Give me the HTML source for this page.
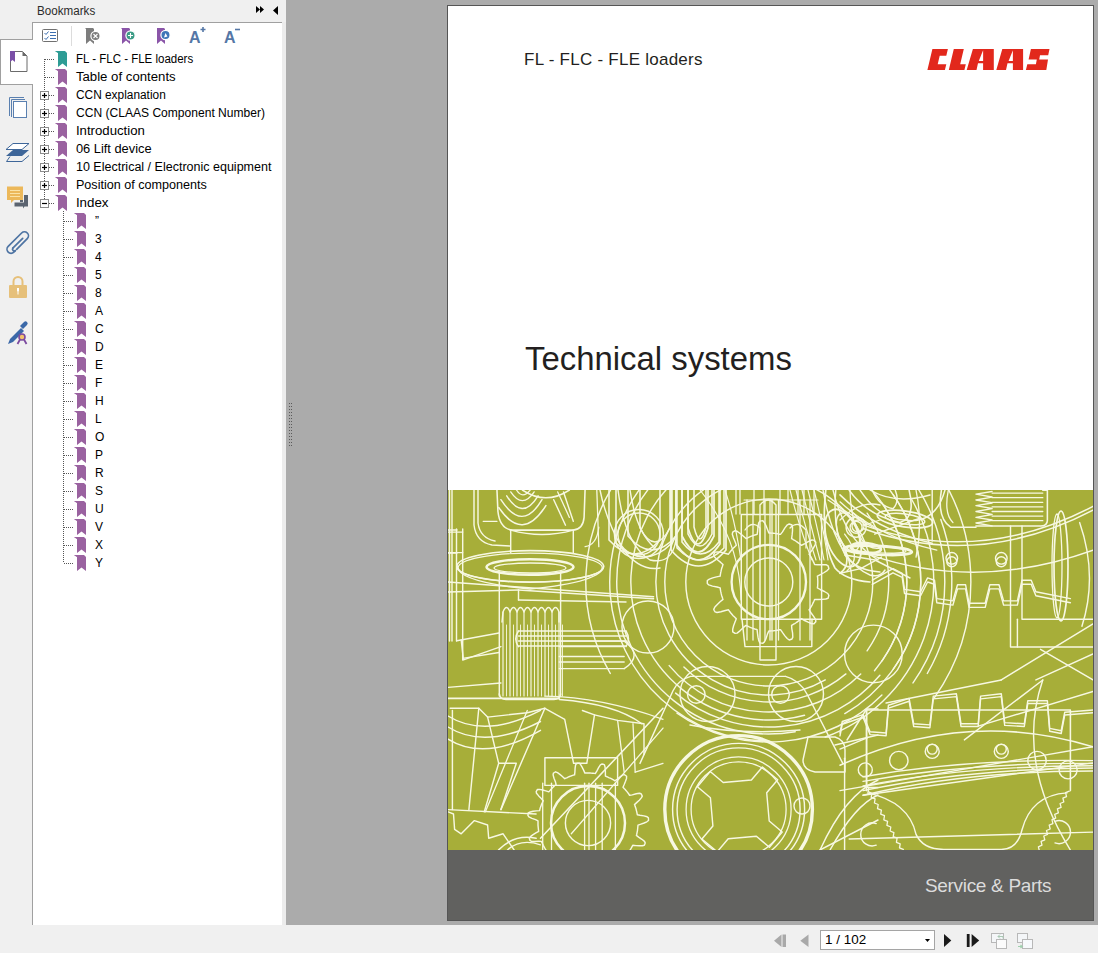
<!DOCTYPE html>
<html><head><meta charset="utf-8">
<style>
html,body{margin:0;padding:0;}
body{width:1098px;height:953px;position:relative;overflow:hidden;background:#f0f0f0;font-family:"Liberation Sans",sans-serif;}
.abs{position:absolute;}
#title{left:37px;top:3px;transform:scaleX(0.97);transform-origin:0 0;font-size:12px;line-height:16px;color:#2b2b2b;}
#panel{left:32px;top:22px;width:250px;height:903px;background:#fff;border-left:1px solid #a0a0a0;border-top:1px solid #a0a0a0;box-sizing:border-box;}
#tab{left:0;top:39px;width:33px;height:46px;background:#fff;border-left:1px solid #a0a0a0;border-top:1px solid #a0a0a0;border-bottom:1px solid #a0a0a0;box-sizing:border-box;}
#split{left:282px;top:22px;width:4px;height:903px;background:#ececec;}
#docarea{left:286px;top:0;width:812px;height:925px;background:#ababab;}
#page{left:447px;top:5px;width:647px;height:916px;background:#fff;border:1px solid #555;box-sizing:border-box;overflow:hidden;}
.row{position:absolute;font-size:12px;color:#000;white-space:nowrap;line-height:14px;}
</style></head>
<body>
<div id="docarea" class="abs"></div>
<div id="split" class="abs"></div>
<div id="panel" class="abs"></div>
<div id="tab" class="abs"></div>
<div id="title" class="abs">Bookmarks</div>
<svg class="abs" style="left:0;top:0" width="290" height="600"><path d="M45 59.5h10" stroke="#555" stroke-dasharray="1 1"/><path d="M55 51h10l2 2v14l-4.5-3.5-4.5 3.5v-14z" fill="#2e9c95"/><path d="M55 51h3v2z" fill="#2e9c95" opacity=".6"/><path d="M45 77.5h10" stroke="#555" stroke-dasharray="1 1"/><path d="M55 69h10l2 2v14l-4.5-3.5-4.5 3.5v-14z" fill="#9a62a0"/><path d="M55 69h3v2z" fill="#9a62a0" opacity=".6"/><rect x="40.5" y="91.5" width="8" height="8" fill="#fff" stroke="#8c8c8c"/><path d="M42 95.5h5" stroke="#000" stroke-width="1.2"/><path d="M44.5 93v5" stroke="#000" stroke-width="1.2"/><path d="M49 95.5h6" stroke="#555" stroke-dasharray="1 1"/><path d="M55 87h10l2 2v14l-4.5-3.5-4.5 3.5v-14z" fill="#9a62a0"/><path d="M55 87h3v2z" fill="#9a62a0" opacity=".6"/><rect x="40.5" y="109.5" width="8" height="8" fill="#fff" stroke="#8c8c8c"/><path d="M42 113.5h5" stroke="#000" stroke-width="1.2"/><path d="M44.5 111v5" stroke="#000" stroke-width="1.2"/><path d="M49 113.5h6" stroke="#555" stroke-dasharray="1 1"/><path d="M55 105h10l2 2v14l-4.5-3.5-4.5 3.5v-14z" fill="#9a62a0"/><path d="M55 105h3v2z" fill="#9a62a0" opacity=".6"/><rect x="40.5" y="127.5" width="8" height="8" fill="#fff" stroke="#8c8c8c"/><path d="M42 131.5h5" stroke="#000" stroke-width="1.2"/><path d="M44.5 129v5" stroke="#000" stroke-width="1.2"/><path d="M49 131.5h6" stroke="#555" stroke-dasharray="1 1"/><path d="M55 123h10l2 2v14l-4.5-3.5-4.5 3.5v-14z" fill="#9a62a0"/><path d="M55 123h3v2z" fill="#9a62a0" opacity=".6"/><rect x="40.5" y="145.5" width="8" height="8" fill="#fff" stroke="#8c8c8c"/><path d="M42 149.5h5" stroke="#000" stroke-width="1.2"/><path d="M44.5 147v5" stroke="#000" stroke-width="1.2"/><path d="M49 149.5h6" stroke="#555" stroke-dasharray="1 1"/><path d="M55 141h10l2 2v14l-4.5-3.5-4.5 3.5v-14z" fill="#9a62a0"/><path d="M55 141h3v2z" fill="#9a62a0" opacity=".6"/><rect x="40.5" y="163.5" width="8" height="8" fill="#fff" stroke="#8c8c8c"/><path d="M42 167.5h5" stroke="#000" stroke-width="1.2"/><path d="M44.5 165v5" stroke="#000" stroke-width="1.2"/><path d="M49 167.5h6" stroke="#555" stroke-dasharray="1 1"/><path d="M55 159h10l2 2v14l-4.5-3.5-4.5 3.5v-14z" fill="#9a62a0"/><path d="M55 159h3v2z" fill="#9a62a0" opacity=".6"/><rect x="40.5" y="181.5" width="8" height="8" fill="#fff" stroke="#8c8c8c"/><path d="M42 185.5h5" stroke="#000" stroke-width="1.2"/><path d="M44.5 183v5" stroke="#000" stroke-width="1.2"/><path d="M49 185.5h6" stroke="#555" stroke-dasharray="1 1"/><path d="M55 177h10l2 2v14l-4.5-3.5-4.5 3.5v-14z" fill="#9a62a0"/><path d="M55 177h3v2z" fill="#9a62a0" opacity=".6"/><rect x="40.5" y="199.5" width="8" height="8" fill="#fff" stroke="#8c8c8c"/><path d="M42 203.5h5" stroke="#000" stroke-width="1.2"/><path d="M49 203.5h6" stroke="#555" stroke-dasharray="1 1"/><path d="M55 195h10l2 2v14l-4.5-3.5-4.5 3.5v-14z" fill="#9a62a0"/><path d="M55 195h3v2z" fill="#9a62a0" opacity=".6"/><path d="M64 221.5h10" stroke="#555" stroke-dasharray="1 1"/><path d="M74 213h10l2 2v14l-4.5-3.5-4.5 3.5v-14z" fill="#9a62a0"/><path d="M74 213h3v2z" fill="#9a62a0" opacity=".6"/><path d="M64 239.5h10" stroke="#555" stroke-dasharray="1 1"/><path d="M74 231h10l2 2v14l-4.5-3.5-4.5 3.5v-14z" fill="#9a62a0"/><path d="M74 231h3v2z" fill="#9a62a0" opacity=".6"/><path d="M64 257.5h10" stroke="#555" stroke-dasharray="1 1"/><path d="M74 249h10l2 2v14l-4.5-3.5-4.5 3.5v-14z" fill="#9a62a0"/><path d="M74 249h3v2z" fill="#9a62a0" opacity=".6"/><path d="M64 275.5h10" stroke="#555" stroke-dasharray="1 1"/><path d="M74 267h10l2 2v14l-4.5-3.5-4.5 3.5v-14z" fill="#9a62a0"/><path d="M74 267h3v2z" fill="#9a62a0" opacity=".6"/><path d="M64 293.5h10" stroke="#555" stroke-dasharray="1 1"/><path d="M74 285h10l2 2v14l-4.5-3.5-4.5 3.5v-14z" fill="#9a62a0"/><path d="M74 285h3v2z" fill="#9a62a0" opacity=".6"/><path d="M64 311.5h10" stroke="#555" stroke-dasharray="1 1"/><path d="M74 303h10l2 2v14l-4.5-3.5-4.5 3.5v-14z" fill="#9a62a0"/><path d="M74 303h3v2z" fill="#9a62a0" opacity=".6"/><path d="M64 329.5h10" stroke="#555" stroke-dasharray="1 1"/><path d="M74 321h10l2 2v14l-4.5-3.5-4.5 3.5v-14z" fill="#9a62a0"/><path d="M74 321h3v2z" fill="#9a62a0" opacity=".6"/><path d="M64 347.5h10" stroke="#555" stroke-dasharray="1 1"/><path d="M74 339h10l2 2v14l-4.5-3.5-4.5 3.5v-14z" fill="#9a62a0"/><path d="M74 339h3v2z" fill="#9a62a0" opacity=".6"/><path d="M64 365.5h10" stroke="#555" stroke-dasharray="1 1"/><path d="M74 357h10l2 2v14l-4.5-3.5-4.5 3.5v-14z" fill="#9a62a0"/><path d="M74 357h3v2z" fill="#9a62a0" opacity=".6"/><path d="M64 383.5h10" stroke="#555" stroke-dasharray="1 1"/><path d="M74 375h10l2 2v14l-4.5-3.5-4.5 3.5v-14z" fill="#9a62a0"/><path d="M74 375h3v2z" fill="#9a62a0" opacity=".6"/><path d="M64 401.5h10" stroke="#555" stroke-dasharray="1 1"/><path d="M74 393h10l2 2v14l-4.5-3.5-4.5 3.5v-14z" fill="#9a62a0"/><path d="M74 393h3v2z" fill="#9a62a0" opacity=".6"/><path d="M64 419.5h10" stroke="#555" stroke-dasharray="1 1"/><path d="M74 411h10l2 2v14l-4.5-3.5-4.5 3.5v-14z" fill="#9a62a0"/><path d="M74 411h3v2z" fill="#9a62a0" opacity=".6"/><path d="M64 437.5h10" stroke="#555" stroke-dasharray="1 1"/><path d="M74 429h10l2 2v14l-4.5-3.5-4.5 3.5v-14z" fill="#9a62a0"/><path d="M74 429h3v2z" fill="#9a62a0" opacity=".6"/><path d="M64 455.5h10" stroke="#555" stroke-dasharray="1 1"/><path d="M74 447h10l2 2v14l-4.5-3.5-4.5 3.5v-14z" fill="#9a62a0"/><path d="M74 447h3v2z" fill="#9a62a0" opacity=".6"/><path d="M64 473.5h10" stroke="#555" stroke-dasharray="1 1"/><path d="M74 465h10l2 2v14l-4.5-3.5-4.5 3.5v-14z" fill="#9a62a0"/><path d="M74 465h3v2z" fill="#9a62a0" opacity=".6"/><path d="M64 491.5h10" stroke="#555" stroke-dasharray="1 1"/><path d="M74 483h10l2 2v14l-4.5-3.5-4.5 3.5v-14z" fill="#9a62a0"/><path d="M74 483h3v2z" fill="#9a62a0" opacity=".6"/><path d="M64 509.5h10" stroke="#555" stroke-dasharray="1 1"/><path d="M74 501h10l2 2v14l-4.5-3.5-4.5 3.5v-14z" fill="#9a62a0"/><path d="M74 501h3v2z" fill="#9a62a0" opacity=".6"/><path d="M64 527.5h10" stroke="#555" stroke-dasharray="1 1"/><path d="M74 519h10l2 2v14l-4.5-3.5-4.5 3.5v-14z" fill="#9a62a0"/><path d="M74 519h3v2z" fill="#9a62a0" opacity=".6"/><path d="M64 545.5h10" stroke="#555" stroke-dasharray="1 1"/><path d="M74 537h10l2 2v14l-4.5-3.5-4.5 3.5v-14z" fill="#9a62a0"/><path d="M74 537h3v2z" fill="#9a62a0" opacity=".6"/><path d="M64 563.5h10" stroke="#555" stroke-dasharray="1 1"/><path d="M74 555h10l2 2v14l-4.5-3.5-4.5 3.5v-14z" fill="#9a62a0"/><path d="M74 555h3v2z" fill="#9a62a0" opacity=".6"/><path d="M44.5 59V91M44.5 100v9M44.5 118v9M44.5 136v9M44.5 154v9M44.5 172v9M44.5 190v9" stroke="#555" stroke-dasharray="1 1"/><path d="M63.5 211V563" stroke="#555" stroke-dasharray="1 1"/></svg>
<div class="row" style="left:76px;top:52px;transform:scaleX(0.958);transform-origin:1px 0">FL - FLC - FLE loaders</div>
<div class="row" style="left:76px;top:70px;transform:scaleX(1.1);transform-origin:1px 0">Table of contents</div>
<div class="row" style="left:76px;top:88px;transform:scaleX(0.989);transform-origin:1px 0">CCN explanation</div>
<div class="row" style="left:76px;top:106px;transform:scaleX(1.005);transform-origin:1px 0">CCN (CLAAS Component Number)</div>
<div class="row" style="left:76px;top:124px;transform:scaleX(1.1);transform-origin:1px 0">Introduction</div>
<div class="row" style="left:76px;top:142px;transform:scaleX(1.07);transform-origin:1px 0">06 Lift device</div>
<div class="row" style="left:76px;top:160px;transform:scaleX(1.043);transform-origin:1px 0">10 Electrical / Electronic equipment</div>
<div class="row" style="left:76px;top:178px;transform:scaleX(1.049);transform-origin:1px 0">Position of components</div>
<div class="row" style="left:76px;top:196px;transform:scaleX(1.11);transform-origin:1px 0">Index</div>
<div class="row" style="left:95px;top:214px">”</div>
<div class="row" style="left:95px;top:232px">3</div>
<div class="row" style="left:95px;top:250px">4</div>
<div class="row" style="left:95px;top:268px">5</div>
<div class="row" style="left:95px;top:286px">8</div>
<div class="row" style="left:95px;top:304px">A</div>
<div class="row" style="left:95px;top:322px">C</div>
<div class="row" style="left:95px;top:340px">D</div>
<div class="row" style="left:95px;top:358px">E</div>
<div class="row" style="left:95px;top:376px">F</div>
<div class="row" style="left:95px;top:394px">H</div>
<div class="row" style="left:95px;top:412px">L</div>
<div class="row" style="left:95px;top:430px">O</div>
<div class="row" style="left:95px;top:448px">P</div>
<div class="row" style="left:95px;top:466px">R</div>
<div class="row" style="left:95px;top:484px">S</div>
<div class="row" style="left:95px;top:502px">U</div>
<div class="row" style="left:95px;top:520px">V</div>
<div class="row" style="left:95px;top:538px">X</div>
<div class="row" style="left:95px;top:556px">Y</div>
<svg class="abs" style="left:0;top:0" width="300" height="460">
<!-- header arrows -->
<path d="M256 6l4 3.5-4 3.5zM260 6l4 3.5-4 3.5z" fill="#000"/>
<path d="M278 6v9l-5-4.5z" fill="#000"/>
<!-- active tab doc icon -->
<path d="M10.5 51.5h12l4.5 4.5v15.5h-16.5z" fill="#fff" stroke="#6b6b6b"/>
<path d="M22.5 51.5v4.5h4.5z" fill="#6b6b6b"/>
<path d="M10 51h5v11l-2.5-2-2.5 2z" fill="#7a4fa6"/>
<!-- pages icon -->
<path d="M9.5 116V97.5h14.5M11.5 117V99.5h13.5" fill="none" stroke="#5a80b0"/>
<rect x="13.5" y="101.5" width="13" height="16" fill="#fff" stroke="#5a80b0"/>
<!-- layers icon -->
<path d="M13 143.5h16l-7 6h-16z" fill="#fff" stroke="#3e6699"/>
<path d="M13 150h16l-7 6h-16z" fill="#3e6699"/>
<path d="M10 156.5l-3.5 5h15.5l7-6" fill="none" stroke="#3e6699"/>
<!-- comments icon -->
<path d="M7 186.5h16v13.5h-9l-3 3v-3h-4z" fill="#ecb85a"/>
<path d="M10 190.5h10M10 193.5h10M10 196.5h10" stroke="#fbe3a8" stroke-width="1"/>
<path d="M24 195h4v11.5h-3.5l-1.5 2v-2h-8.5v-4h9.5z" fill="#5b6470"/>
<path d="M23 200h-3v2h3z" fill="#5b6470"/>
<!-- paperclip -->
<g transform="rotate(-45 18.3 242)" fill="none" stroke="#4e74a3" stroke-width="1.7" stroke-linecap="round">
<path d="M12 246 H27 A4 4 0 0 0 27 238 H8 A4 4 0 0 0 8 246 H10"/>
<path d="M10 242.5 H24" />
<path d="M10 242.5 A1.8 1.8 0 0 0 10 246"/>
</g>
<!-- lock -->
<path d="M13.5 285v-3.5a4.5 4.5 0 0 1 9 0v3.5" fill="none" stroke="#e6c07a" stroke-width="2"/>
<rect x="9" y="285" width="18" height="13" rx="1" fill="#e6c07a"/>
<path d="M17 288h2v3l-0.5 0.5v3h-1v-3l-0.5-0.5z" fill="#fff"/>
<!-- sign icon -->
<path d="M8 344l2-5 11-11 3 3-11 11z" fill="#3b68a8"/>
<path d="M20 326l4-4a2 2 0 0 1 3 3l-4 4z" fill="#3b68a8"/>
<circle cx="22" cy="337" r="3" fill="#f2c36b" stroke="#7c4ba0" stroke-width="1.6"/>
<path d="M20 339.5l-2.5 4.5M24 339.5l2.5 4.5" stroke="#7c4ba0" stroke-width="1.8"/>
<!-- toolbar: checklist -->
<rect x="42.5" y="29.5" width="15" height="12" rx="1" fill="#fff" stroke="#707070"/>
<path d="M44.5 33l1.5 1.5 2.5-3M44.5 38l1.5 1.5 2.5-3" fill="none" stroke="#3d6fb0" stroke-width="1"/>
<path d="M50 32.5h6M50 35.5h6M50 38.5h6" stroke="#3d6fb0" stroke-width="1"/>
<path d="M71.5 26v20" stroke="#dcdcdc"/>
<!-- gray bookmark x -->
<path d="M85 28h8l1 1v15l-4-3.5-4 3.5v-15z" fill="#7d7d7d"/>
<circle cx="95.5" cy="36" r="4.6" fill="#7d7d7d" stroke="#fff" stroke-width="1.2"/>
<path d="M93.5 34l4 4M97.5 34l-4 4" stroke="#fff" stroke-width="1.1"/>
<!-- purple bookmark plus -->
<path d="M121 28h8l1 1v15l-4-3.5-4 3.5v-15z" fill="#8a55a8"/>
<circle cx="130.5" cy="35.5" r="4.6" fill="#3c9c86" stroke="#fff" stroke-width="1.2"/>
<path d="M128 35.5h5M130.5 33v5" stroke="#fff" stroke-width="1.1"/>
<!-- purple bookmark arrow -->
<path d="M157 28h7l1 1v15l-4-3.5-4 3.5v-15z" fill="#8a55a8"/>
<circle cx="165.5" cy="35" r="4.6" fill="#3f76b8" stroke="#fff" stroke-width="1.2"/>
<path d="M164 37.5l1.5-4.5 2 3.5z" fill="#fff"/>
<!-- A+ A- -->
<text x="189" y="43" font-family="Liberation Sans" font-weight="bold" font-size="16" fill="#5577a6">A</text>
<path d="M200.5 29.5h5M203 27v5" stroke="#5577a6" stroke-width="1.6"/>
<text x="224" y="43" font-family="Liberation Sans" font-weight="bold" font-size="16" fill="#5577a6">A</text>
<path d="M235 29.5h5" stroke="#5577a6" stroke-width="1.6"/>
<!-- splitter dots -->
<g fill="#5a5a5a">
<rect x="289" y="403" width="1" height="1"/><rect x="291" y="403" width="1" height="1"/><rect x="289" y="406" width="1" height="1"/><rect x="291" y="406" width="1" height="1"/><rect x="289" y="409" width="1" height="1"/><rect x="291" y="409" width="1" height="1"/><rect x="289" y="412" width="1" height="1"/><rect x="291" y="412" width="1" height="1"/><rect x="289" y="415" width="1" height="1"/><rect x="291" y="415" width="1" height="1"/><rect x="289" y="418" width="1" height="1"/><rect x="291" y="418" width="1" height="1"/><rect x="289" y="421" width="1" height="1"/><rect x="291" y="421" width="1" height="1"/><rect x="289" y="424" width="1" height="1"/><rect x="291" y="424" width="1" height="1"/><rect x="289" y="427" width="1" height="1"/><rect x="291" y="427" width="1" height="1"/><rect x="289" y="430" width="1" height="1"/><rect x="291" y="430" width="1" height="1"/><rect x="289" y="433" width="1" height="1"/><rect x="291" y="433" width="1" height="1"/><rect x="289" y="436" width="1" height="1"/><rect x="291" y="436" width="1" height="1"/><rect x="289" y="439" width="1" height="1"/><rect x="291" y="439" width="1" height="1"/><rect x="289" y="442" width="1" height="1"/><rect x="291" y="442" width="1" height="1"/><rect x="289" y="445" width="1" height="1"/><rect x="291" y="445" width="1" height="1"/></g>
</svg>

<div id="page" class="abs"></div>
<div class="abs" style="left:448px;top:490px;width:645px;height:360px;background:#a7ae39;overflow:hidden"><svg width="645" height="360" style="position:absolute;left:0;top:0"><g transform="translate(-448 -490)" fill="none" stroke="#f7f8e2" stroke-linejoin="round" stroke-linecap="round"><circle cx="768.8" cy="582.0" r="83.0" stroke-width="1.43"/><circle cx="768.8" cy="582.0" r="104.0" stroke-width="1.43"/><path d="M825.3 679.9 A113 113 0 1 1 825.3 484.1" stroke-width="1.43"/><path d="M804.5 715.3 A138 138 0 1 1 816.0 452.3" stroke-width="1.43"/><path d="M795.2 731.7 A152 152 0 1 1 782.0 430.6" stroke-width="1.43"/><path d="M768.8 741.0 A159 159 0 0 1 741.2 425.4" stroke-width="1.43"/><path d="M610.3 673.5 A183 183 0 0 1 618.9 477.0" stroke-width="1.43"/><path d="M837.8 462.5 A138 138 0 0 1 874.5 670.7" stroke-width="1.43"/><path d="M885.2 484.3 A152 152 0 0 1 844.8 713.6" stroke-width="1.43"/><path d="M911.7 499.5 A165 165 0 0 1 825.2 737.0" stroke-width="1.43"/><path d="M940.8 519.4 A183 183 0 0 1 927.3 673.5" stroke-width="1.43"/><path d="M721.8 596.0 L721.5 594.9 L721.2 593.7 L721.0 592.6 L720.7 591.4 L720.5 590.2 L720.3 589.1 L720.2 587.9 L717.1 587.0 L712.5 586.1 L708.8 584.9 L707.3 583.5 L707.3 582.0 L707.3 580.5 L709.4 579.1 L712.7 577.9 L716.5 576.9 L720.2 576.1 L720.3 574.9 L720.5 573.8 L720.7 572.6 L721.0 571.4 L721.2 570.3 L721.5 569.1 L721.8 568.0 L722.2 566.9 L722.6 565.7 L723.0 564.6 L720.7 562.4 L717.1 559.5 L714.3 556.7 L713.7 554.7 L714.3 553.4 L715.1 552.1 L717.6 551.9 L721.1 552.3 L724.8 553.2 L728.5 554.2 L729.2 553.2 L729.9 552.2 L730.6 551.3 L731.3 550.4 L732.1 549.5 L732.9 548.6 L733.7 547.8 L734.6 546.9 L735.4 546.1 L736.3 545.3 L735.3 542.3 L733.5 538.0 L732.3 534.2 L732.7 532.2 L733.9 531.4 L735.1 530.6 L737.4 531.5 L740.3 533.6 L743.2 536.0 L746.0 538.6 L747.1 538.1 L748.2 537.6 L749.2 537.1 L750.3 536.6 L751.4 536.2 L752.5 535.8 L753.7 535.4 L754.8 535.0 L755.9 534.7 L757.1 534.4 L757.6 531.3 L758.0 526.6 L758.7 522.8 L759.9 521.1 L761.4 520.9 L762.9 520.8 L764.5 522.7 L766.1 525.9 L767.5 529.4 L768.8 533.0 L770.0 533.0 L771.2 533.1 L772.3 533.1 L773.5 533.2 L774.7 533.4 L775.9 533.5 L777.0 533.7 L778.2 533.9 L779.4 534.2 L780.5 534.4 L782.5 531.9 L784.9 527.9 L787.4 524.8 L789.2 524.0 L790.6 524.5 L792.0 525.0 L792.5 527.5 L792.5 531.0 L792.1 534.9 L791.6 538.6 L792.6 539.2 L793.6 539.8 L794.7 540.4 L795.7 541.0 L796.6 541.7 L797.6 542.4 L798.6 543.1 L799.5 543.8 L800.4 544.5 L801.3 545.3 L804.2 544.0 L808.2 541.6 L811.8 540.0 L813.8 540.1 L814.8 541.2 L815.8 542.3 L815.1 544.8 L813.5 547.9 L811.3 551.1 L809.1 554.2 L809.8 555.1 L810.4 556.1 L811.0 557.2 L811.6 558.2 L812.2 559.2 L812.7 560.3 L813.2 561.4 L813.7 562.4 L814.2 563.5 L814.6 564.6 L817.8 564.8 L822.5 564.6 L826.4 564.8 L828.1 565.8 L828.5 567.3 L828.9 568.7 L827.1 570.6 L824.2 572.5 L820.8 574.4 L817.4 576.1 L817.6 577.3 L817.7 578.5 L817.7 579.6 L817.8 580.8 L817.8 582.0 L817.8 583.2 L817.7 584.4 L817.7 585.5 L817.6 586.7 L817.4 587.9 L820.2 589.5 L824.4 591.5 L827.8 593.5 L828.9 595.3 L828.5 596.7 L828.1 598.2 L825.8 599.0 L822.3 599.4 L818.4 599.5 L814.6 599.4 L814.2 600.5 L813.7 601.6 L813.2 602.6 L812.7 603.7 L812.2 604.8 L811.6 605.8 L811.0 606.8 L810.4 607.9 L809.8 608.9 L809.1 609.8 L810.8 612.5 L813.6 616.3 L815.7 619.6 L815.8 621.7 L814.8 622.8 L813.8 623.9 L811.3 623.5 L808.1 622.2 L804.6 620.5 L801.3 618.7 L800.4 619.5 L799.5 620.2 L798.6 620.9 L797.6 621.6 L796.6 622.3 L795.7 623.0 L794.7 623.6 L793.6 624.2 L792.6 624.8 L791.6 625.4 L791.8 628.6 L792.6 633.2 L792.8 637.1 L792.0 639.0 L790.6 639.5 L789.2 640.0 L787.2 638.5 L784.9 635.9 L782.6 632.7 L780.5 629.6 L779.4 629.8 L778.2 630.1 L777.0 630.3 L775.9 630.5 L774.7 630.6 L773.5 630.8 L772.3 630.9 L771.2 630.9 L770.0 631.0 L768.8 631.0 L767.5 633.9 L766.1 638.4 L764.4 641.9 L762.9 643.2 L761.4 643.1 L759.9 642.9 L758.8 640.6 L758.0 637.2 L757.5 633.3 L757.1 629.6 L755.9 629.3 L754.8 629.0 L753.7 628.6 L752.5 628.2 L751.4 627.8 L750.3 627.4 L749.2 626.9 L748.2 626.4 L747.1 625.9 L746.0 625.4 L743.5 627.4 L740.2 630.6 L737.1 633.1 L735.1 633.4 L733.9 632.6 L732.7 631.8 L732.7 629.2 L733.6 625.8 L734.9 622.2 L736.3 618.7 L735.4 617.9 L734.6 617.1 L733.7 616.2 L732.9 615.4 L732.1 614.5 L731.3 613.6 L730.6 612.7 L729.9 611.8 L729.2 610.8 L728.5 609.8 L725.3 610.5 L720.9 611.8 L717.0 612.5 L715.1 611.9 L714.3 610.6 L713.7 609.3 L714.9 607.0 L717.3 604.4 L720.1 601.8 L723.0 599.4 L722.6 598.3 L722.2 597.1 L721.8 596.0 Z" stroke-width="1.43"/><circle cx="768.8" cy="582.0" r="37.2" stroke-width="2.34"/><circle cx="768.8" cy="582.0" r="24.0" stroke-width="1.43"/><path d="M741.3 514.5 L821.6 514.5 L821.6 619.2 L741.3 619.2 Z" stroke-width="1.43"/><path d="M742.0 619.2 L745.0 646.6 L811.8 646.6 L812.0 619.2" stroke-width="1.43"/><path d="M747.0 500.0 L747.0 640.0" stroke-width="1.30"/><path d="M753.0 500.0 L753.0 640.0" stroke-width="1.30"/><path d="M765.0 500.0 L765.0 640.0" stroke-width="1.30"/><path d="M770.0 500.0 L770.0 640.0" stroke-width="1.30"/><path d="M772.0 500.0 L772.0 640.0" stroke-width="1.30"/><path d="M778.5 500.0 L778.5 640.0" stroke-width="1.30"/><path d="M800.0 500.0 L800.0 640.0" stroke-width="1.30"/><path d="M810.0 500.0 L810.0 640.0" stroke-width="1.30"/><path d="M760 505 Q768 495 776 505 L776 660 L760 660 Z" stroke-width="1.43"/><path d="M677 490 L677 548 Q700.5 572 724 548 L724 490" stroke-width="1.56"/><path d="M682 490 L682 542 Q700.5 566 719 542 L719 490" stroke-width="1.56"/><path d="M688 490 L688 534 Q700.0 558 712 534 L712 490" stroke-width="1.56"/><path d="M694 490 L694 527 Q700.0 551 706 527 L706 490" stroke-width="1.56"/><path d="M618 490 Q625 545 650 560 Q672 565 676 540" stroke-width="1.43"/><path d="M630 490 Q636 532 655 548" stroke-width="1.43"/><ellipse cx="843.0" cy="538.0" rx="16.0" ry="30.0" stroke-width="1.82" transform="rotate(-20 843 538)"/><ellipse cx="848.0" cy="532.0" rx="10.0" ry="20.0" stroke-width="1.43" transform="rotate(-20 848 532)"/><path d="M823 490 Q835 560 870 575 Q880 578 885 570" stroke-width="1.43"/><path d="M833 490 Q845 540 878 560" stroke-width="1.43"/><path d="M860 490 Q880 520 905 520 Q935 525 945 490" stroke-width="1.43"/><path d="M845.0 555.0 L875.0 560.0 L910.0 578.0" stroke-width="1.43"/><ellipse cx="905.0" cy="519.0" rx="28.0" ry="8.0" stroke-width="1.69" transform="rotate(8 905 519)"/><ellipse cx="905.0" cy="519.0" rx="20.0" ry="5.0" stroke-width="1.43" transform="rotate(8 905 519)"/><path d="M870 490 Q895 505 930 495" stroke-width="1.43"/><path d="M790 490 Q800 530 812 560" stroke-width="1.17"/><path d="M796 490 Q806 530 816 560" stroke-width="1.17"/><path d="M802 490 Q812 530 820 560" stroke-width="1.17"/><path d="M808 490 Q818 530 824 560" stroke-width="1.17"/><path d="M814 490 Q824 530 828 560" stroke-width="1.17"/><path d="M700 490 Q740 540 741 600" stroke-width="1.17"/><path d="M725 490 Q735 520 741 560" stroke-width="1.17"/><path d="M449.5 490.0 L449.5 641.0" stroke-width="1.43"/><path d="M452.0 490.0 L452.0 641.0" stroke-width="1.43"/><path d="M456.5 529.0 L456.5 641.0" stroke-width="1.43"/><path d="M462.7 529.0 L462.7 660.0" stroke-width="1.43"/><path d="M448.0 530.0 L457.0 530.0" stroke-width="1.43"/><path d="M448.0 553.0 L457.0 553.0" stroke-width="1.43"/><path d="M474 490 L474 525 Q476 542 492 545 L510 546" stroke-width="1.43"/><path d="M478 490 L478 523 Q480 538 495 541" stroke-width="1.43"/><path d="M496.9524182494615 489.9580967299785 L497.93146661445076 511.4971607597415 Q499.88956334442923 529.1200313295477 512.6171920892892 530.099079694537 L573.3181907186215 530.099079694537 Q583.1086743685138 529.1200313295477 584.087722733503 517.371450949677 L585.0667710984923 489.9580967299785" stroke-width="1.56"/><path d="M498.9 507.6 Q522.4 542.8 545.9 505.6" stroke-width="1.56"/><path d="M500.9 499.7 Q522.4 533.0 542.0 499.7" stroke-width="1.43"/><path d="M506.7 495.8 Q522.4 521.3 538.1 495.8" stroke-width="1.43"/><path d="M510.7 491.9 Q522.4 509.5 534.2 491.9" stroke-width="1.30"/><path d="M516.5 490.0 Q522.4 499.7 530.2 490.0" stroke-width="1.30"/><path d="M522.4 490.0 Q545.9 505.6 569.4 490.0" stroke-width="1.56"/><path d="M553.7 499.7 L565.5 525.2" stroke-width="1.43"/><path d="M563.5 491.9 L573.3 521.3" stroke-width="1.43"/><path d="M557.7 491.9 L569.4 517.4" stroke-width="1.30"/><path d="M510.7 530.1 Q542.0 538.9 573.3 530.1" stroke-width="1.43"/><path d="M510.7 530.1 L510.7 552.6" stroke-width="1.43"/><path d="M573.3 530.1 L573.3 552.6" stroke-width="1.43"/><path d="M483.2 521.3 L497.0 521.3" stroke-width="1.30"/><path d="M448.0 532.1 L462.7 532.1" stroke-width="1.30"/><path d="M448.0 552.6 L462.7 552.6" stroke-width="1.30"/><path d="M596.8 490.0 L598.8 546.7" stroke-width="1.30"/><path d="M585.1 546.7 Q596.8 544.8 598.8 527.2" stroke-width="1.30"/><ellipse cx="530.2" cy="566.4" rx="73.4" ry="15.7" stroke-width="1.69" transform="rotate(0 530.2 566.4)"/><ellipse cx="530.2" cy="567.6" rx="72.0" ry="14.5" stroke-width="1.17" transform="rotate(0 530.2 567.6)"/><path d="M457 566 Q458 582 530 589 Q602 582 603.6 566" stroke-width="1.43"/><ellipse cx="530.0" cy="567.0" rx="43.5" ry="7.8" stroke-width="2.60" transform="rotate(0 530 567)"/><ellipse cx="530.0" cy="568.0" rx="36.0" ry="5.0" stroke-width="1.30" transform="rotate(0 530 568)"/><path d="M499.3 572.0 L499.3 696.0" stroke-width="1.43"/><path d="M560.6 572.0 L560.6 696.0" stroke-width="1.43"/><path d="M499.3 694 Q500 699.4 506 699.4 L554 699.4 Q560 699.4 560.6 694" stroke-width="1.69"/><path d="M502 622 L503 612 Q506.5 603 510 612 L510 612 Q513.5 603 517 612 L517 612 Q520.5 603 524 612 L524 612 Q527.5 603 531 612 L531 612 Q534.5 603 538 612 L538 612 Q541.5 603 545 612 L545 612 Q548.5 603 552 612 L552 612 Q555.5 603 559 612 L559 622" stroke-width="1.43"/><path d="M503.0 612.0 L503.0 696.0" stroke-width="1.17"/><path d="M506.5 625.0 L506.5 696.0" stroke-width="0.91"/><path d="M510.0 612.0 L510.0 696.0" stroke-width="1.17"/><path d="M513.5 625.0 L513.5 696.0" stroke-width="0.91"/><path d="M517.0 612.0 L517.0 696.0" stroke-width="1.17"/><path d="M520.5 625.0 L520.5 696.0" stroke-width="0.91"/><path d="M524.0 612.0 L524.0 696.0" stroke-width="1.17"/><path d="M527.5 625.0 L527.5 696.0" stroke-width="0.91"/><path d="M531.0 612.0 L531.0 696.0" stroke-width="1.17"/><path d="M534.5 625.0 L534.5 696.0" stroke-width="0.91"/><path d="M538.0 612.0 L538.0 696.0" stroke-width="1.17"/><path d="M541.5 625.0 L541.5 696.0" stroke-width="0.91"/><path d="M545.0 612.0 L545.0 696.0" stroke-width="1.17"/><path d="M548.5 625.0 L548.5 696.0" stroke-width="0.91"/><path d="M552.0 612.0 L552.0 696.0" stroke-width="1.17"/><path d="M555.5 625.0 L555.5 696.0" stroke-width="0.91"/><path d="M559.0 612.0 L559.0 696.0" stroke-width="1.17"/><path d="M562.5 625.0 L562.5 696.0" stroke-width="0.91"/><path d="M518.5 631 L626 631" stroke-width="1.30"/><path d="M518.5 636 L626 636" stroke-width="1.30"/><path d="M518.5 641 L626 641" stroke-width="1.30"/><path d="M518.5 646 L626 646" stroke-width="1.30"/><path d="M518.5 631 Q513 639 518.5 646.7" stroke-width="1.43"/><path d="M626 631 Q631 639 626 646.7" stroke-width="1.43"/><path d="M448.0 582.0 L653.6 596.7" stroke-width="1.43"/><path d="M518.5 590.0 L653.6 598.7" stroke-width="1.43"/><path d="M448.0 592.0 L518.5 590.0" stroke-width="1.43"/><path d="M518.5 590.0 L518.5 600.0" stroke-width="1.43"/><path d="M518.5 600.0 L626.0 602.0" stroke-width="1.43"/><path d="M456.8 640.8 L499 633" stroke-width="1.43"/><path d="M462.7 658.4 L499 652.5" stroke-width="1.43"/><circle cx="638.9" cy="534.0" r="24.5" stroke-width="1.43"/><circle cx="638.9" cy="534.0" r="21.0" stroke-width="1.43"/><circle cx="648.0" cy="627.0" r="26.0" stroke-width="1.43"/><path d="M559.2 641.1 L624.2 641.1" stroke-width="1.30"/><path d="M559.2 646.6 L624.2 646.6" stroke-width="1.30"/><path d="M559.2 656.5 L624.2 656.5" stroke-width="1.30"/><path d="M559.2 662.0 L624.2 662.0" stroke-width="1.30"/><path d="M559.2 668.6 L624.2 668.6" stroke-width="1.30"/><path d="M624.2114537444934 641.1013215859031 Q644.0352422907489 655.4185022026431 624.2114537444934 668.6343612334801" stroke-width="1.43"/><path d="M461.2 640.0 L463.4 659.8 L500.9 646.6" stroke-width="1.43"/><path d="M448.0 687.4 L500.9 683.0" stroke-width="1.43"/><path d="M448.0 698.4 L559.2 698.4" stroke-width="1.56"/><path d="M559.2334801762115 699.4713656387665 Q615.4008810572687 703.8766519823788 641.8325991189428 723.7004405286343" stroke-width="1.43"/><path d="M544.9162995594713 696.1674008810572 Q602.1850220264317 697.2687224669603 662.9779735682819 719.295154185022" stroke-width="1.30"/><path d="M450.2 708.3 L478.8 708.3 L487.6 717.1" stroke-width="1.43"/><path d="M448.0 715.9911894273127 Q485.44493392070484 739.1189427312776 540.5110132158591 710.4845814977973" stroke-width="1.43"/><path d="M448.0 727.0044052863436 Q485.44493392070484 750.1321585903083 540.5110132158591 721.4977973568282" stroke-width="1.43"/><path d="M448.0 739.1189427312776 Q485.44493392070484 762.2466960352423 540.5110132158591 730.3083700440528" stroke-width="1.43"/><path d="M452.4 710.5 L452.4 809.6" stroke-width="1.43"/><path d="M478.8 708.3 L468.9 809.6" stroke-width="1.43"/><path d="M487.6 717.1 L498.7 763.3 L484.3 811.8" stroke-width="1.43"/><path d="M498.7 763.3 L516.3 763.3 L500.9 809.6" stroke-width="1.43"/><path d="M487.6 717.1 L527.3 712.7 L544.9 708.3" stroke-width="1.43"/><path d="M544.9 708.3 L500.9 809.6" stroke-width="1.43"/><path d="M527.3 710.5 L485.4 811.8" stroke-width="1.30"/><path d="M544.9 708.3 L564.7 719.3 L573.6 763.3 L586.8 763.3 L594.5 714.9 L582.4 710.5" stroke-width="1.43"/><path d="M594.5 714.9 L617.6 720.4 L644.0 723.7 L644.0 754.5" stroke-width="1.43"/><path d="M617.6 720.4 L624.2 772.2" stroke-width="1.30"/><path d="M633.0 723.7 L635.2 772.2" stroke-width="1.30"/><path d="M544.9 757.8 L617.6 757.8 L617.6 785.4 L544.9 785.4 Z" stroke-width="1.43"/><path d="M588.0 773.0 L589.0 773.0 L590.1 773.0 L591.1 773.1 L592.2 773.2 L593.2 773.3 L594.3 773.4 L595.3 773.5 L596.8 771.2 L598.6 767.7 L600.4 764.9 L601.8 764.0 L603.1 764.3 L604.3 764.6 L605.0 766.7 L605.3 769.6 L605.4 772.9 L605.4 776.1 L606.4 776.5 L607.4 776.9 L608.3 777.3 L609.3 777.8 L610.2 778.2 L611.2 778.7 L612.1 779.2 L613.0 779.7 L613.9 780.2 L614.8 780.8 L617.1 779.3 L620.1 776.8 L622.9 774.9 L624.6 774.7 L625.6 775.5 L626.6 776.3 L626.5 778.4 L625.5 781.3 L624.3 784.3 L623.0 787.3 L623.7 788.0 L624.4 788.8 L625.2 789.5 L625.8 790.3 L626.5 791.1 L627.2 791.9 L627.8 792.8 L628.5 793.6 L629.1 794.5 L629.6 795.3 L632.3 794.9 L636.2 793.8 L639.5 793.3 L641.1 793.8 L641.7 794.9 L642.3 796.1 L641.3 797.9 L639.3 800.2 L636.9 802.4 L634.5 804.6 L634.9 805.6 L635.2 806.6 L635.6 807.5 L635.9 808.5 L636.2 809.6 L636.4 810.6 L636.7 811.6 L636.9 812.6 L637.1 813.6 L637.3 814.7 L639.9 815.3 L643.9 815.9 L647.1 816.8 L648.4 817.9 L648.5 819.2 L648.5 820.5 L646.8 821.8 L644.1 823.0 L641.0 824.1 L638.0 825.1 L637.9 826.1 L637.8 827.2 L637.7 828.2 L637.6 829.3 L637.5 830.3 L637.3 831.3 L637.1 832.4 L636.9 833.4 L636.7 834.4 L636.4 835.4 L638.6 837.1 L641.9 839.3 L644.5 841.4 L645.2 842.9 L644.8 844.1 L644.3 845.3 L642.3 845.8 L639.3 845.8 L636.0 845.6 L632.8 845.2 L632.3 846.2 L631.8 847.1 L631.3 848.0 L630.8 848.9 L630.2 849.8 L629.6 850.7 L629.1 851.5 L628.5 852.4 L627.8 853.2 L627.2 854.1 L628.5 856.5 L630.6 859.8 L632.2 862.8 L632.2 864.5 L631.3 865.4 L630.4 866.3 L628.3 865.9 L625.5 864.7 L622.7 863.1 L619.9 861.5 L619.1 862.2 L618.2 862.8 L617.4 863.5 L616.5 864.1 L615.7 864.6 L614.8 865.2 L613.9 865.8 L613.0 866.3 L612.1 866.8 L611.2 867.3 L611.3 870.0 L612.0 873.9 L612.2 877.3 L611.5 878.9 L610.3 879.3 L609.1 879.8 L607.4 878.6 L605.3 876.4 L603.3 873.8 L601.4 871.2 L600.4 871.4 L599.4 871.7 L598.4 871.9 L597.4 872.1 L596.3 872.3 L595.3 872.5 L594.3 872.6 L593.2 872.7 L592.2 872.8 L591.1 872.9 L590.2 875.5 L589.2 879.3 L588.0 882.4 L586.7 883.6 L585.5 883.5 L584.2 883.5 L583.1 881.6 L582.1 878.8 L581.4 875.6 L580.7 872.5 L579.7 872.3 L578.6 872.1 L577.6 871.9 L576.6 871.7 L575.6 871.4 L574.6 871.2 L573.5 870.9 L572.5 870.6 L571.6 870.2 L570.6 869.9 L568.7 871.8 L566.2 874.9 L563.8 877.3 L562.2 877.8 L561.1 877.3 L559.9 876.7 L559.6 874.6 L559.9 871.6 L560.5 868.4 L561.2 865.2 L560.3 864.6 L559.5 864.1 L558.6 863.5 L557.8 862.8 L556.9 862.2 L556.1 861.5 L555.3 860.8 L554.5 860.2 L553.8 859.4 L553.0 858.7 L550.5 859.7 L547.0 861.5 L543.8 862.8 L542.1 862.6 L541.3 861.6 L540.5 860.6 L541.1 858.6 L542.6 856.0 L544.4 853.3 L546.4 850.7 L545.8 849.8 L545.2 848.9 L544.7 848.0 L544.2 847.1 L543.7 846.2 L543.2 845.2 L542.8 844.3 L542.3 843.3 L541.9 842.4 L541.5 841.4 L538.8 841.3 L534.8 841.5 L531.5 841.4 L530.0 840.5 L529.6 839.3 L529.3 838.1 L530.7 836.4 L533.1 834.7 L535.9 832.9 L538.7 831.3 L538.5 830.3 L538.4 829.3 L538.3 828.2 L538.2 827.2 L538.1 826.1 L538.0 825.1 L538.0 824.0 L538.0 823.0 L538.0 822.0 L538.0 820.9 L535.6 819.7 L531.9 818.3 L528.9 816.8 L527.9 815.4 L528.1 814.1 L528.2 812.9 L530.2 812.0 L533.1 811.3 L536.4 810.9 L539.6 810.6 L539.8 809.6 L540.1 808.5 L540.4 807.5 L540.8 806.6 L541.1 805.6 L541.5 804.6 L541.9 803.6 L542.3 802.7 L542.8 801.7 L543.2 800.8 L541.5 798.7 L538.7 795.9 L536.5 793.3 L536.2 791.6 L536.8 790.5 L537.5 789.5 L539.7 789.4 L542.6 790.0 L545.8 790.9 L548.8 791.9 L549.5 791.1 L550.2 790.3 L550.8 789.5 L551.6 788.8 L552.3 788.0 L553.0 787.3 L553.8 786.6 L554.5 785.8 L555.3 785.2 L556.1 784.5 L555.4 781.8 L554.0 778.2 L553.1 774.9 L553.4 773.2 L554.5 772.5 L555.5 771.8 L557.5 772.7 L559.9 774.4 L562.4 776.5 L564.8 778.7 L565.8 778.2 L566.7 777.8 L567.7 777.3 L568.6 776.9 L569.6 776.5 L570.6 776.1 L571.6 775.8 L572.5 775.4 L573.5 775.1 L574.6 774.8 L574.9 772.1 L575.1 768.2 L575.6 764.9 L576.6 763.5 L577.9 763.2 L579.1 763.1 L580.6 764.6 L582.1 767.2 L583.6 770.1 L584.9 773.1 L585.9 773.0 L587.0 773.0 L588.0 773.0 Z" stroke-width="1.43"/><circle cx="588.0" cy="823.0" r="37.0" stroke-width="2.47"/><circle cx="588.0" cy="823.0" r="22.6" stroke-width="1.43"/><path d="M542.7 783.2 L542.7 849.9" stroke-width="1.30"/><path d="M551.5 783.2 L551.5 849.9" stroke-width="1.30"/><path d="M584.6 783.2 L584.6 849.9" stroke-width="1.30"/><path d="M589.0 783.2 L589.0 849.9" stroke-width="1.30"/><path d="M595.6 783.2 L595.6 849.9" stroke-width="1.30"/><path d="M602.2 783.2 L602.2 849.9" stroke-width="1.30"/><path d="M615.4 783.2 L615.4 849.9" stroke-width="1.30"/><path d="M448.0 811.8 L453.5 814.0 L454.6 829.4 L461.2 833.8 L474.4 820.6 L487.6 825.0 L488.7 838.2 L503.1 833.8 L514.1 849.9" stroke-width="1.43"/><path d="M448.0 809.6 L536.1 814.0" stroke-width="1.43"/><path d="M663.0 708.3 L540.5 838.2" stroke-width="1.56"/><path d="M663.0 728.1 L571.3 833.8" stroke-width="1.30"/><path d="M635.2 772.2 L663.0 763.3" stroke-width="1.30"/><path d="M498.66079295154185 849.9118942731277 Q514.079295154185 833.8325991189428 536.1057268722467 838.237885462555" stroke-width="1.56"/><path d="M507.47136563876654 849.9118942731277 Q520.6872246696036 838.237885462555 540.5110132158591 844.8458149779735" stroke-width="1.30"/><circle cx="738.6" cy="809.4" r="73.8" stroke-width="3.38"/><circle cx="738.6" cy="809.4" r="66.0" stroke-width="1.43"/><circle cx="738.6" cy="809.4" r="61.5" stroke-width="1.43"/><circle cx="738.6" cy="809.4" r="52.5" stroke-width="1.30"/><circle cx="738.6" cy="809.4" r="47.5" stroke-width="1.30"/><path d="M751.4 780.0 L762.4 767.0 L777.7 779.8 L766.7 792.8 L769.2 821.0 L782.2 832.0 L769.4 847.3 L756.4 836.3 L728.2 838.8 L717.2 851.8 L701.9 839.0 L712.9 826.0 L710.4 797.8 L697.4 786.8 L710.2 771.5 L723.2 782.5 Z" stroke-width="1.43"/><circle cx="696.3" cy="694.5" r="8.8" stroke-width="1.43"/><circle cx="780.5" cy="694.5" r="8.8" stroke-width="1.43"/><circle cx="707.5" cy="694.0" r="27.5" stroke-width="1.43"/><circle cx="796.0" cy="694.0" r="27.5" stroke-width="1.43"/><path d="M690.7 676.4 L785.5 676.4" stroke-width="1.43"/><path d="M690.7 676.4 Q678 680 673 690.7 L640 763.4" stroke-width="1.43"/><path d="M785.5 676.4 Q800 680 807.5 695 L842.8 763.4" stroke-width="1.43"/><path d="M690 725 Q740 735 800 730" stroke-width="1.43"/><path d="M808 737 L835 737 Q845 740 845 750 L845 772 L815 772 Q803 770 803 760 Z" stroke-width="1.43"/><path d="M866.6 709.0 L878.0 709.0" stroke-width="1.43"/><path d="M866.6 709.0 L866.6 787.5 L878.0 787.5" stroke-width="1.43"/><path d="M847.0 740.0 L866.6 709.0" stroke-width="1.43"/><path d="M820 850 Q845 795 878 780" stroke-width="1.43"/><path d="M830 850 Q855 805 878 795" stroke-width="1.43"/><circle cx="802.0" cy="806.0" r="8.0" stroke-width="1.43"/><path d="M845.9 673.9 A120 120 0 0 1 683.9 666.9" stroke-width="1.43"/><path d="M860.7 673.9 A130 130 0 0 1 669.2 665.6" stroke-width="1.43"/><path d="M879.9 675.2 A145 145 0 0 1 675.6 693.1" stroke-width="1.43"/><path d="M881.9 695.1 A160 160 0 0 1 677.0 713.1" stroke-width="1.43"/><path d="M835.0 745.0 L878.0 735.0" stroke-width="1.43"/><path d="M820.0 850.0 L878.0 820.0" stroke-width="1.43"/><path d="M992.1 493.1 L1042.8 493.1" stroke-width="1.30"/><path d="M992.1 497.7 L1042.8 497.7" stroke-width="1.30"/><path d="M992.1 502.3 L1042.8 502.3" stroke-width="1.30"/><path d="M992.1 506.9 L1042.8 506.9" stroke-width="1.30"/><path d="M992.1 511.5 L1042.8 511.5" stroke-width="1.30"/><path d="M992.1 516.1 L1042.8 516.1" stroke-width="1.30"/><path d="M992.1 520.7 L1042.8 520.7" stroke-width="1.30"/><path d="M992.1 491.5 L975.9 494.2 L992.1 497.0 L992.1 497.2 L975.9 500.0 L992.1 502.7 L992.1 503.0 L975.9 505.7 L992.1 508.5 L992.1 508.7 L975.9 511.5 L992.1 514.3 L992.1 514.5 L975.9 517.3 L992.1 520.0 L992.1 520.3 L975.9 523.0 L992.1 525.8" stroke-width="1.30"/><path d="M1042.7649769585253 490.3041474654378 L1047.373271889401 490.3041474654378 L1047.373271889401 520.258064516129 Q1047.373271889401 526.0184331797235 1040.4608294930877 526.0184331797235 L975.9447004608295 526.0184331797235" stroke-width="1.56"/><path d="M941.3824884792626 490.3041474654378 Q936.7741935483871 517.9539170506912 950.5990783410139 527.1705069124424 L975.9447004608295 527.1705069124424" stroke-width="1.56"/><path d="M948.294930875576 490.3041474654378 Q943.6866359447005 513.3456221198156 952.9032258064516 522.5622119815669" stroke-width="1.30"/><path d="M932.2 490.3 L932.2 541.0" stroke-width="1.43"/><path d="M863.0414746543779 524.8663594470046 Q978.2488479262672 566.3410138248848 1092.995391705069 506.4331797235023" stroke-width="1.56"/><path d="M863.0414746543779 528.552995391705 Q978.2488479262672 570.0276497695852 1092.995391705069 510.11981566820276" stroke-width="1.56"/><path d="M869.9539170506912 554.8202764976959 Q978.2488479262672 591.6866359447005 1092.995391705069 550.2119815668203" stroke-width="1.43"/><circle cx="951.8" cy="558.3" r="5.8" stroke-width="1.43"/><circle cx="951.8" cy="561.7" r="5.0" stroke-width="1.43"/><circle cx="1001.3" cy="558.3" r="5.8" stroke-width="1.43"/><circle cx="1001.3" cy="561.7" r="5.0" stroke-width="1.43"/><path d="M872.3 580.2 L893.0 568.6 L902.2 573.3 L904.5 589.4 L920.6 591.7 L927.6 577.9 L934.5 580.2 L936.8 598.6 L952.9 600.9 L957.5 584.8 L965.6 584.8 L969.0 603.2 L985.2 603.2 L989.8 584.8 L999.0 584.8 L1003.6 600.9 L1017.4 600.9 L1022.0 580.2 L1031.2 580.2 L1035.9 591.7 L1070.4 598.6" stroke-width="1.43"/><path d="M872.3 584.3 L893.0 572.8 L902.2 577.4 L904.5 593.5 L920.6 595.8 L927.6 582.0 L934.5 584.3 L936.8 602.7 L952.9 605.1 L957.5 588.9 L965.6 588.9 L969.0 607.4 L985.2 607.4 L989.8 588.9 L999.0 588.9 L1003.6 605.1 L1017.4 605.1 L1022.0 584.3 L1031.2 584.3 L1035.9 595.8 L1070.4 602.7" stroke-width="1.43"/><circle cx="873.4" cy="653.9" r="28.8" stroke-width="1.43"/><path d="M1010.5 526.0 L1010.5 647.0 L1093.0 647.0" stroke-width="1.43"/><path d="M1022.0 526.0 L1022.0 619.3 L1093.0 619.3" stroke-width="1.43"/><path d="M1017.4 619.3 L1017.4 647.0" stroke-width="1.43"/><ellipse cx="1061.0" cy="566.0" rx="7.0" ry="55.0" stroke-width="1.69" transform="rotate(0 1061 566)"/><ellipse cx="1057.0" cy="566.0" rx="5.0" ry="52.0" stroke-width="1.30" transform="rotate(0 1057 566)"/><path d="M1079.63133640553 522.5622119815669 Q1098.0645161290322 575.557603686636 1081.9354838709678 626.2488479262672" stroke-width="1.43"/><path d="M1001.3 679.9 L1093.0 623.9" stroke-width="1.43"/><path d="M1035.9 679.9 L1093.0 653.9" stroke-width="1.43"/><path d="M1040.5 649.3 L1093.0 679.9" stroke-width="1.43"/><path d="M867.1 513.2 A120 120 0 0 1 867.1 650.8" stroke-width="1.43"/><path d="M881.8 502.8 A138 138 0 0 1 881.8 661.2" stroke-width="1.43"/><path d="M893.3 494.8 A152 152 0 0 1 893.3 669.2" stroke-width="1.43"/><path d="M913.0 481.1 A176 176 0 0 1 913.0 682.9" stroke-width="1.43"/><path d="M934.3 466.1 A202 202 0 0 1 934.3 697.9" stroke-width="1.43"/><ellipse cx="878.0" cy="550.2" rx="34.0" ry="4.5" stroke-width="2.60" transform="rotate(3 878.0184331797235 550.2119815668203)"/><ellipse cx="878.0" cy="549.8" rx="28.0" ry="3.0" stroke-width="1.30" transform="rotate(3 878.0184331797235 549.7511520737327)"/><circle cx="856.1" cy="527.2" r="10.0" stroke-width="1.43"/><circle cx="856.1" cy="527.2" r="6.0" stroke-width="1.43"/><path d="M840.0 494.91244239631334 Q874.5622119815669 529.4746543778801 932.1658986175115 543.2995391705069" stroke-width="1.56"/><path d="M840.0 501.82488479262673 Q876.8663594470046 536.3870967741935 936.7741935483871 550.2119815668203" stroke-width="1.30"/><path d="M849.2165898617511 490.3041474654378 Q867.6497695852535 515.6497695852535 899.9078341013825 522.5622119815669 Q916.036866359447 517.9539170506912 909.1244239631336 490.3041474654378" stroke-width="1.56"/><path d="M872.258064516129 490.3041474654378 Q879.1705069124424 506.4331797235023 892.9953917050691 508.73732718894007 Q899.9078341013825 501.82488479262673 895.2995391705069 490.3041474654378" stroke-width="1.43"/><path d="M840.0 538.6912442396314 Q853.8248847926267 564.036866359447 840.0 573.2534562211981" stroke-width="1.69"/><path d="M844.6082949308756 534.0829493087558 Q863.0414746543779 557.1244239631336 846.9124423963134 570.9493087557604" stroke-width="1.30"/><path d="M840.0 573.3 L860.7 568.6 L881.5 557.1" stroke-width="1.43"/><path d="M874.6 534.1 L920.6 518.0" stroke-width="1.43"/><path d="M916.036866359447 490.3041474654378 Q922.9493087557604 522.5622119815669 916.036866359447 557.1244239631336" stroke-width="1.30"/><path d="M840.0 733.0 L842.3 721.5 L863.0 714.6 L870.0 731.8 L886.1 733.0 L888.4 705.3 L909.1 698.4 L913.7 723.8 L929.9 724.9 L933.3 696.1 L956.4 693.8 L961.0 723.8 L978.2 723.8 L980.6 696.1 L1001.3 693.8 L1004.7 722.6 L1024.3 723.8 L1027.8 700.7 L1047.4 700.7 L1049.7 728.4 L1061.2 730.7 L1064.7 712.3 L1093.0 710.0" stroke-width="1.43"/><path d="M840.0 735.8 L842.3 724.2 L863.0 717.3 L870.0 734.6 L886.1 735.8 L888.4 708.1 L909.1 701.2 L913.7 726.5 L929.9 727.7 L933.3 698.9 L956.4 696.6 L961.0 726.5 L978.2 726.5 L980.6 698.9 L1001.3 696.6 L1004.7 725.4 L1024.3 726.5 L1027.8 703.5 L1047.4 703.5 L1049.7 731.2 L1061.2 733.5 L1064.7 715.0 L1093.0 712.7" stroke-width="1.43"/><path d="M866.5 790.6 L866.5 710.0 L1070.4 710.0 L1070.4 790.6" stroke-width="1.56"/><path d="M840.0 765.2534562211981 Q966.7281105990784 707.6497695852535 1092.995391705069 746.8202764976959" stroke-width="1.56"/><path d="M863.0414746543779 776.7741935483871 Q966.7281105990784 758.3410138248848 1092.995391705069 760.6451612903226" stroke-width="1.43"/><path d="M863.0414746543779 781.3824884792626 Q966.7281105990784 762.4884792626729 1092.995391705069 763.4101382488479" stroke-width="1.43"/><path d="M863.0414746543779 785.9907834101382 Q966.7281105990784 765.7142857142858 1092.995391705069 765.7142857142858" stroke-width="1.43"/><path d="M863.0414746543779 790.5990783410139 Q966.7281105990784 768.7096774193549 1092.995391705069 768.0184331797235" stroke-width="1.43"/><path d="M863.0414746543779 795.2073732718894 Q966.7281105990784 771.0138248847926 1092.995391705069 771.0138248847926" stroke-width="1.43"/><path d="M840.0 790.6 L1093.0 746.8" stroke-width="1.43"/><path d="M863.0 795.2 L1093.0 762.9" stroke-width="1.43"/><circle cx="898.8" cy="760.6" r="9.2" stroke-width="1.43"/><circle cx="932.2" cy="751.4" r="7.0" stroke-width="1.43"/><circle cx="932.2" cy="749.1" r="5.0" stroke-width="1.43"/><circle cx="1001.3" cy="751.4" r="7.0" stroke-width="1.43"/><circle cx="1001.3" cy="749.1" r="5.0" stroke-width="1.43"/><circle cx="1037.0" cy="760.6" r="9.2" stroke-width="1.43"/><circle cx="1068.1" cy="769.9" r="9.0" stroke-width="1.43"/><circle cx="865.3" cy="769.9" r="7.0" stroke-width="1.43"/><path d="M867.6497695852535 792.9032258064516 Q909.1244239631336 802.1198156682028 916.036866359447 834.3778801843318 Q922.9493087557604 849.3548387096774 943.6866359447005 849.3548387096774 L1001.2903225806451 849.3548387096774 Q1017.4193548387098 849.3548387096774 1022.0276497695852 829.7695852534562 Q1031.2442396313363 795.2073732718894 1066.958525345622 792.9032258064516" stroke-width="1.43"/><path d="M849.2 839.0 L1093.0 832.1" stroke-width="1.43"/><path d="M868.8 787.7 L868.1 791.7 L871.9 793.3 L871.2 797.4 L875.1 798.9 L874.4 803.0 L878.2 804.5 L877.5 808.6 L881.4 810.1 L880.7 814.2 L884.5 815.7 L883.8 819.8 L887.6 821.3 L886.9 825.4 L890.8 827.0 L890.1 831.0 L893.9 832.6 L893.2 836.6 L897.1 838.2 L896.4 842.3 L900.2 843.8 L899.5 847.9 L903.3 849.4" stroke-width="1.30"/><path d="M1069.3 791.2 L1065.6 792.7 L1066.5 796.6 L1062.9 798.1 L1063.8 802.0 L1060.1 803.5 L1061.1 807.4 L1057.4 808.9 L1058.4 812.8 L1054.7 814.3 L1055.7 818.2 L1052.0 819.7 L1052.9 823.6 L1049.2 825.1 L1050.2 829.0 L1046.5 830.5 L1047.5 834.4 L1043.8 836.0 L1044.8 839.8 L1041.1 841.4 L1042.0 845.2 L1038.4 846.8 L1039.3 850.6" stroke-width="1.30"/><path d="M876.2 845.2 A11.5 11.5 0 1 1 876.2 823.6" stroke-width="1.43"/><path d="M1055.0 821.3 A11.5 11.5 0 1 1 1055.0 842.9" stroke-width="1.43"/><path d="M1042.7649769585253 680.0 Q1015.1152073732719 760.6451612903226 1070.4147465437788 850.0460829493088" stroke-width="1.43"/><path d="M886.1 703.0 L1001.3 680.0" stroke-width="1.43"/><path d="M964.4 739.9 L1042.8 680.0" stroke-width="1.43"/><path d="M978.2 726.1 L1093.0 691.5" stroke-width="1.43"/><path d="M844.6 758.3 L844.6 850.0" stroke-width="1.43"/><path d="M840.0 749.1 L867.6 737.6" stroke-width="1.43"/><path d="M609 488 L609 540 Q634.5 568 660 540 L660 488" stroke-width="1.56"/><path d="M616 488 L616 543 Q644.0 571 672 543 L672 488" stroke-width="1.56"/><path d="M628 488 L628 536 Q652.0 564 676 536 L676 488" stroke-width="1.56"/><path d="M640 488 L640 528 Q655.0 556 670 528 L670 488" stroke-width="1.56"/><path d="M600 490 Q606 520 622 548 Q640 572 660 568" stroke-width="1.43"/><path d="M676 488 L676 544 Q698.0 576 720 544 L720 488" stroke-width="1.69"/><path d="M682 488 L682 536 Q698.0 568 714 536 L714 488" stroke-width="1.69"/><path d="M688 488 L688 528 Q698.0 560 708 528 L708 488" stroke-width="1.69"/><path d="M671 488 L671 550 Q698.5 582 726 550 L726 488" stroke-width="1.69"/><path d="M736.0 488.0 L736.0 514.0" stroke-width="1.30"/><path d="M740.0 488.0 L740.0 514.0" stroke-width="1.30"/><path d="M754.0 488.0 L754.0 514.0" stroke-width="1.30"/><path d="M764.0 488.0 L764.0 514.0" stroke-width="1.30"/><path d="M780.0 488.0 L780.0 514.0" stroke-width="1.30"/><path d="M788.0 488.0 L788.0 514.0" stroke-width="1.30"/><path d="M798.0 488.0 L798.0 514.0" stroke-width="1.30"/><path d="M804.0 488.0 L804.0 514.0" stroke-width="1.30"/><path d="M814.0 488.0 L814.0 514.0" stroke-width="1.30"/><path d="M744.0 500.0 L818.0 500.0" stroke-width="1.17"/><path d="M745 530 Q752 520 760 528 L760 545" stroke-width="1.30"/><path d="M790 528 Q798 520 806 530 L806 548" stroke-width="1.30"/><path d="M826 488 Q820 540 835 568 Q845 580 870 582" stroke-width="1.69"/><path d="M836 488 Q832 530 845 555 Q855 570 880 572" stroke-width="1.43"/><path d="M850 488 Q850 520 862 540 Q870 550 880 548" stroke-width="1.30"/><ellipse cx="866.0" cy="548.0" rx="15.0" ry="5.0" stroke-width="2.60" transform="rotate(5 866 548)"/><path d="M840 520 Q860 500 880 505" stroke-width="1.30"/><path d="M828 500 Q850 515 878 530" stroke-width="1.30"/><path d="M850.0 510.0 L865.0 525.0 L880.0 520.0" stroke-width="1.30"/><circle cx="858.0" cy="526.0" r="6.0" stroke-width="1.30"/></g></svg></div>
<div class="abs" style="left:448px;top:850px;width:645px;height:70px;background:#61615f"></div>
<div class="abs" style="left:524px;top:51.2px;font-size:17px;line-height:17px;letter-spacing:0.25px;color:#231f20;white-space:nowrap">FL - FLC - FLE loaders</div>
<div class="abs" style="left:525px;top:343.2px;font-size:32.9px;line-height:32.9px;color:#231f20;white-space:nowrap">Technical systems</div>
<div class="abs" style="left:925px;top:875.5px;font-size:19px;line-height:19px;color:#dcdcdc;white-space:nowrap;letter-spacing:-0.32px">Service &amp; Parts</div>
<svg class="abs" style="left:920px;top:44px" width="140" height="32"><g transform="translate(-920 -44)"><polygon points="927.4,70.1 932.4,49 947.9,49 946.3,55.8 939.7,55.8 937.7,64.2 946.3,64.2 944.9,70.1" fill="#e2281c"/><polygon points="948.8,70.1 953.8,49 963.8,49 960.2,64.2 965.8,64.2 964.4,70.1" fill="#e2281c"/><polygon points="966.7,70.1 972.9,49 993.8,49 993.8,70.1 983.1,70.1 983.1,63.3 978,63.3 976.5,70.1" fill="#e2281c"/><polygon points="996.3,70.1 1002.3,49 1023.1,49 1023.1,70.1 1012.9,70.1 1012.9,63.3 1007.5,63.3 1006,70.1" fill="#e2281c"/><polygon points="1030.9,49 1049.5,49 1048.2,55.3 1040,55.3 1039.2,59.5 1048,59.5 1046.3,70.1 1025.9,70.1 1027.3,64.2 1035.9,64.2 1036.8,59.5 1028.6,59.5" fill="#e2281c"/><polygon points="983.1,50.3 983.1,61 978.8,61" fill="#fff"/><polygon points="1012.9,50.3 1012.9,61 1008.6,61" fill="#fff"/></g></svg>


<svg class="abs" style="left:760px;top:925px" width="300" height="28">
<g transform="translate(-760 -925)">
<path d="M781.5 934.5v12.5l-7.5-6.25z" fill="#a9a9a9"/>
<rect x="782.5" y="934.5" width="3.5" height="12.5" fill="#a9a9a9"/>
<path d="M808.5 934.5v12.5l-8.2-6.25z" fill="#a9a9a9"/>
<rect x="820.5" y="930.5" width="114" height="19" fill="#fff" stroke="#a5a5a5"/>
<path d="M925 939h5l-2.5 3z" fill="#000"/>
<path d="M944 934v13l7.3-6.5z" fill="#1a1a1a"/>
<rect x="966.8" y="934" width="2.8" height="13" fill="#1a1a1a"/>
<path d="M971.6 934v13l7.6-6.5z" fill="#1a1a1a"/>
<rect x="991.5" y="933.5" width="12" height="9" fill="#f4f6f8" stroke="#b8b8b8"/>
<rect x="996.5" y="939.5" width="10" height="9" fill="#fbfbfb" stroke="#b8b8b8"/>
<path d="M1000 934.5l-2 2 2 2M998 936.5h5v2" fill="none" stroke="#a9c9b3" stroke-width="1"/>
<rect x="1017.5" y="933.5" width="10" height="9" fill="#f4f6f8" stroke="#b8b8b8"/>
<rect x="1022.5" y="939.5" width="10" height="9" fill="#f7f9fc" stroke="#b8b8b8"/>
<path d="M1018 946.5h4l-1.5-1.5M1022 946.5l-1.5 1.5" fill="none" stroke="#9fcfae" stroke-width="1.2"/>
</g>
</svg>
<div class="abs" style="left:825px;top:933px;font-size:12px;line-height:14px;color:#000;white-space:nowrap;transform:scaleX(1.12);transform-origin:0 0">1 / 102</div>

</body></html>
